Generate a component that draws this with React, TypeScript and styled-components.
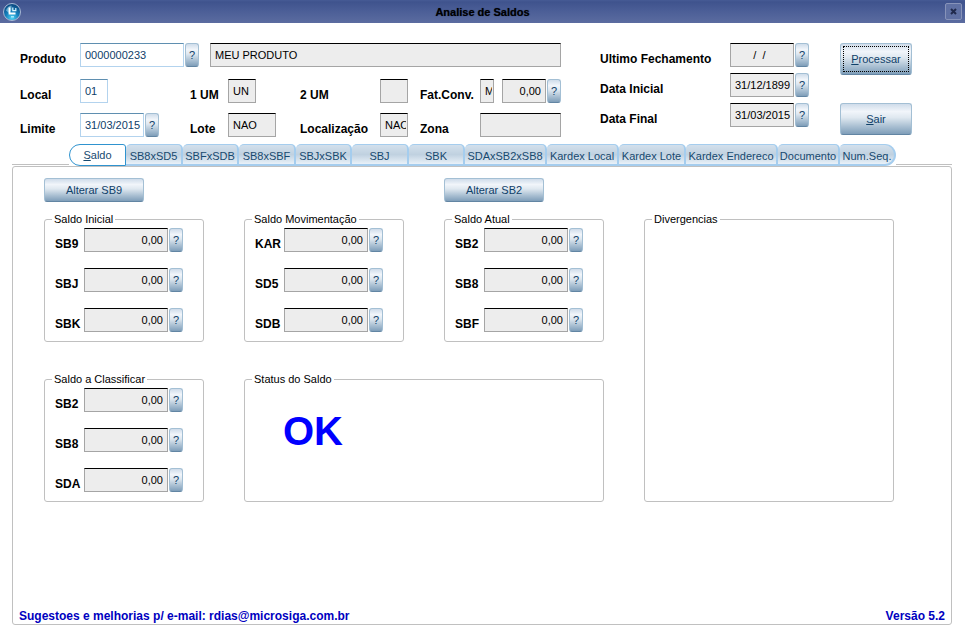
import React, { useId, useState } from "react";
import styled, { createGlobalStyle, css } from "styled-components";

const GlobalStyle = createGlobalStyle`
  *, *::before, *::after { box-sizing: border-box; }
  body {
    margin: 0;
    background: #fff;
    color: #000;
    font-family: "Liberation Sans", Arial, sans-serif;
    font-size: 11px;
    line-height: 12px;
  }
  button, input { font: inherit; margin: 0; }
`;

const Window = styled.div`
  display: flex;
  flex-direction: column;
  min-height: 100vh;
`;

const TitleBar = styled.header`
  display: grid;
  grid-template-columns: 24px 1fr 24px;
  align-items: center;
  height: 23px;
  background: linear-gradient(#465b95 0, #3f538d 2px, #4a5d96 10px, #5b6ca0 100%);

  > svg { justify-self: center; }
`;

const Title = styled.h1`
  margin: 0;
  font-size: 11px;
  line-height: 12px;
  text-align: center;
  text-shadow: 0 0 1px #1b2547;
`;

const CloseButton = styled.button`
  display: grid;
  place-items: center;
  width: 17px;
  height: 17px;
  justify-self: center;
  padding: 0;
  border: 1px solid #8793b9;
  border-radius: 2px;
  background: #5f70a3;
`;

const Header = styled.section`
  display: grid;
  grid-template-columns: 1fr 209px 72px;
  column-gap: 31px;
  padding: 20px 53px 7px 20px;
`;

const ProductForm = styled.div`
  display: flex;
  flex-direction: column;
  gap: 10px;
  padding-right: 8px;
`;

const ProductRow = styled.div`
  display: grid;
  grid-template-columns: 60px 130px 1fr;
  margin-bottom: 2px;
`;

const DetailRow = styled.div`
  display: grid;
  grid-template-columns: 60px 110px 38px 72px 80px 40px 60px 1fr;
`;

const DateList = styled.div`
  display: grid;
  grid-template-columns: 130px 1fr;
  row-gap: 6px;
  align-content: start;
`;

const Actions = styled.div`
  display: flex;
  flex-direction: column;
  gap: 28px;
`;

const Label = styled.label`
  align-self: end;
  font-size: 12px;
  font-weight: bold;
  line-height: 16px;
  white-space: nowrap;
`;

const FieldGroup = styled.div`
  display: flex;
  gap: 1px;
`;

const Field = styled.input<{ $width?: number; $numeric?: boolean }>`
  min-width: 0;
  height: 24px;
  padding: 0 1px 0 4px;
  border: 1px solid #a5a5a5;
  border-top-color: #000;
  border-radius: 0;
  background: #ededed;
  color: #000;
  outline: none;
  ${(p) => (p.$width ? css`flex: none; width: ${p.$width}px;` : css`flex: 1; width: 100%;`)}
  ${(p) =>
    p.$numeric &&
    css`
      padding: 0 4px 0 1px;
      text-align: right;
    `}
  ${(p) =>
    !p.readOnly &&
    css`
      border-color: #5f8fb0 #b3d3ee #b3d3ee;
      background: #fff;
      color: #0f4069;
    `}
`;

const glossy = css`
  border: 1px solid #a3bfd4;
  border-bottom-color: #6285a3;
  border-radius: 3px;
  background: linear-gradient(#cfdcea 0, #f1f5fa 25%, #dfe8f0 45%, #a9bfd2 75%, #7f9eb9 100%);
  color: #0f4069;
`;

const HelpButton = styled.button`
  ${glossy}
  flex: none;
  width: 14px;
  height: 24px;
  padding: 0;
  text-align: center;
`;

const ActionButton = styled.button<{ $focused?: boolean }>`
  ${glossy}
  height: 32px;
  padding: 2px;

  > span {
    display: grid;
    place-items: center;
    height: 100%;
    border: 1px dotted ${(p) => (p.$focused ? "#000" : "transparent")};
  }
`;

const PlainButton = styled.button`
  ${glossy}
  width: 100px;
  height: 24px;
  padding: 0;
`;

const TabBar = styled.div`
  display: flex;
  height: 22px;
  margin: 0 13px 0 12px;
`;

const TabRule = styled.span<{ $grow?: boolean }>`
  flex: ${(p) => (p.$grow ? "1" : "0 0 57px")};
  height: 21px;
  border-bottom: 1px solid #c0c0c0;
`;

const Tab = styled.button<{ $width: number; $active: boolean }>`
  flex: none;
  width: ${(p) => p.$width}px;
  height: 22px;
  padding: 2px 0 0;
  border: 1px solid #a5cdee;
  border-left-width: 0;
  border-right-width: 2px;
  border-bottom-width: 2px;
  border-radius: 5px 5px 0 0;
  background: linear-gradient(#d3e0ec, #c0d1e0 50%, #e9f1f8);
  color: #17496f;
  white-space: nowrap;

  &:last-of-type { border-radius: 5px 12px 12px 0; }

  ${(p) =>
    p.$active &&
    css`
      padding: 0;
      border: 1px solid #2f93cf;
      border-radius: 11px 3px 0 11px;
      background: #fff;
    `}
`;

const Panel = styled.main`
  display: flex;
  flex: 1;
  flex-direction: column;
  margin: 0 13px 9px 12px;
  border: 1px solid #c0c0c0;
  border-radius: 3px;
`;

const PanelGrid = styled.div`
  display: grid;
  grid-template-columns: 160fr 160fr 160fr 250fr;
  column-gap: 40px;
  row-gap: 31px;
  padding: 11px 57px 0 31px;
`;

const Commands = styled(PanelGrid)`
  > :last-child { grid-column: 3; }
`;

const Group = styled.fieldset<{ $tall?: boolean; $wide?: boolean }>`
  min-width: 0;
  margin: 0;
  padding: 0;
  border: 1px solid #c0c0c0;
  border-radius: 3px;
  ${(p) => p.$tall && css`grid-area: 1 / 4 / 3 / 5;`}
  ${(p) => p.$wide && css`grid-column: 2 / 4;`}
`;

const Legend = styled.legend`
  margin-left: 7px;
  padding: 0 2px;
`;

const BalanceGrid = styled.div`
  display: grid;
  grid-template-columns: 29px 1fr;
  row-gap: 16px;
  padding: 3px 20px 9px 10px;
`;

const StatusText = styled.output`
  display: block;
  padding: 22px 38px 0;
  color: #00f;
  font-size: 40px;
  font-weight: bold;
  line-height: 48px;
`;

const Footer = styled.footer`
  display: flex;
  justify-content: space-between;
  margin-top: auto;
  padding: 0 6px;
  color: #0000c0;
  font-size: 12px;
  font-weight: bold;
  line-height: 16px;

  a { color: inherit; text-decoration: none; }
`;

const ConversionFields = styled.div`
  display: flex;
  gap: 8px;
`;

const ConversionValue = styled(FieldGroup)`
  flex: 1;
`;

function Logo() {
  return (
    <svg width="20" height="20" viewBox="0 0 20 20" aria-hidden="true">
      <defs>
        <radialGradient id="globe" cx="0.5" cy="0.85" r="0.75">
          <stop offset="0" stopColor="#4fd4f5" />
          <stop offset="0.5" stopColor="#1581bd" />
          <stop offset="1" stopColor="#0b4d86" />
        </radialGradient>
      </defs>
      <circle cx="10" cy="10" r="8.5" fill="url(#globe)" stroke="#a9b8d4" />
      <path d="M4 8.5Q5.5 4 9.5 3.5V8L7 11Z" fill="#9fdcf3" opacity=".6" />
      <path d="M7.5 5.5V11.5H13.5" fill="none" stroke="#fff" strokeWidth="1.8" />
      <path d="M10.8 5.5V8.6H13.8V6" fill="none" stroke="#d9f3fc" strokeWidth="1.2" />
      <path d="M9 14.8H12" stroke="#c5f3ff" strokeWidth="1.2" />
    </svg>
  );
}

function Help({ topic }: { topic: string }) {
  return <HelpButton type="button" aria-label={`Ajuda: ${topic}`}>?</HelpButton>;
}

interface LabeledFieldProps {
  label: string;
  value: string;
  width?: number;
  numeric?: boolean;
  editable?: boolean;
  help?: boolean;
}

function LabeledField({ label, value, width, numeric, editable, help }: LabeledFieldProps) {
  const id = useId();
  return (
    <>
      <Label htmlFor={id}>{label}</Label>
      <FieldGroup>
        <Field id={id} defaultValue={value} readOnly={!editable} $width={width} $numeric={numeric} />
        {help && <Help topic={label} />}
      </FieldGroup>
    </>
  );
}

function BalanceGroup({ title, rows }: { title: string; rows: string[] }) {
  return (
    <Group>
      <Legend>{title}</Legend>
      <BalanceGrid>
        {rows.map((row) => (
          <LabeledField key={row} label={row} value="0,00" numeric help />
        ))}
      </BalanceGrid>
    </Group>
  );
}

const tabs = [
  { name: "Saldo", width: 57 },
  { name: "SB8xSD5", width: 57 },
  { name: "SBFxSDB", width: 56 },
  { name: "SB8xSBF", width: 57 },
  { name: "SBJxSBK", width: 56 },
  { name: "SBJ", width: 57 },
  { name: "SBK", width: 56 },
  { name: "SDAxSB2xSB8", width: 82 },
  { name: "Kardex Local", width: 72 },
  { name: "Kardex Lote", width: 67 },
  { name: "Kardex Endereco", width: 92 },
  { name: "Documento", width: 62 },
  { name: "Num.Seq.", width: 56 },
];

export default function App() {
  const [active, setActive] = useState("Saldo");
  return (
    <Window>
      <GlobalStyle />
      <TitleBar>
        <Logo />
        <Title>Analise de Saldos</Title>
        <CloseButton type="button" aria-label="Fechar">
          <svg width="7" height="7" viewBox="0 0 7 7" aria-hidden="true">
            <path d="M1 1L6 6M6 1L1 6" stroke="#202a4c" strokeWidth="2" />
          </svg>
        </CloseButton>
      </TitleBar>

      <Header>
        <ProductForm>
          <ProductRow>
            <LabeledField label="Produto" value="0000000233" width={104} editable help />
            <Field aria-label="Descrição do produto" defaultValue="MEU PRODUTO" readOnly />
          </ProductRow>
          <DetailRow>
            <LabeledField label="Local" value="01" width={28} editable />
            <LabeledField label="1 UM" value="UN" width={28} />
            <LabeledField label="2 UM" value="" width={28} />
            <Label htmlFor="fatconv">Fat.Conv.</Label>
            <ConversionFields>
              <Field aria-label="Tipo de conversão" defaultValue="M" readOnly $width={14} />
              <ConversionValue>
                <Field id="fatconv" defaultValue="0,00" readOnly $numeric />
                <Help topic="Fat.Conv." />
              </ConversionValue>
            </ConversionFields>
          </DetailRow>
          <DetailRow>
            <LabeledField label="Limite" value="31/03/2015" width={64} editable help />
            <LabeledField label="Lote" value="NAO" width={48} />
            <LabeledField label="Localização" value="NAO" width={28} />
            <LabeledField label="Zona" value="" />
          </DetailRow>
        </ProductForm>
        <DateList>
          <LabeledField label="Ultimo Fechamento" value="      /  /" help />
          <LabeledField label="Data Inicial" value="31/12/1899" help />
          <LabeledField label="Data Final" value="31/03/2015" help />
        </DateList>
        <Actions>
          <ActionButton type="button" $focused>
            <span><span><u>P</u>rocessar</span></span>
          </ActionButton>
          <ActionButton type="button">
            <span><span><u>S</u>air</span></span>
          </ActionButton>
        </Actions>
      </Header>

      <TabBar role="tablist">
        <TabRule />
        {tabs.map((tab) => (
          <Tab
            key={tab.name}
            type="button"
            role="tab"
            aria-selected={active === tab.name}
            $active={active === tab.name}
            $width={tab.width}
            onClick={() => setActive(tab.name)}
          >
            {tab.name === "Saldo" ? <><u>S</u>aldo</> : tab.name}
          </Tab>
        ))}
        <TabRule $grow />
      </TabBar>

      <Panel>
        <Commands>
          <PlainButton type="button">Alterar SB9</PlainButton>
          <PlainButton type="button">Alterar SB2</PlainButton>
        </Commands>
        <PanelGrid>
          <BalanceGroup title="Saldo Inicial" rows={["SB9", "SBJ", "SBK"]} />
          <BalanceGroup title="Saldo Movimentação" rows={["KAR", "SD5", "SDB"]} />
          <BalanceGroup title="Saldo Atual" rows={["SB2", "SB8", "SBF"]} />
          <Group $tall>
            <Legend>Divergencias</Legend>
          </Group>
          <BalanceGroup title="Saldo a Classificar" rows={["SB2", "SB8", "SDA"]} />
          <Group $wide>
            <Legend>Status do Saldo</Legend>
            <StatusText>OK</StatusText>
          </Group>
        </PanelGrid>
        <Footer>
          <span>
            Sugestoes e melhorias p/ e-mail: <a href="mailto:rdias@microsiga.com.br">rdias@microsiga.com.br</a>
          </span>
          <span>Versão 5.2</span>
        </Footer>
      </Panel>
    </Window>
  );
}
